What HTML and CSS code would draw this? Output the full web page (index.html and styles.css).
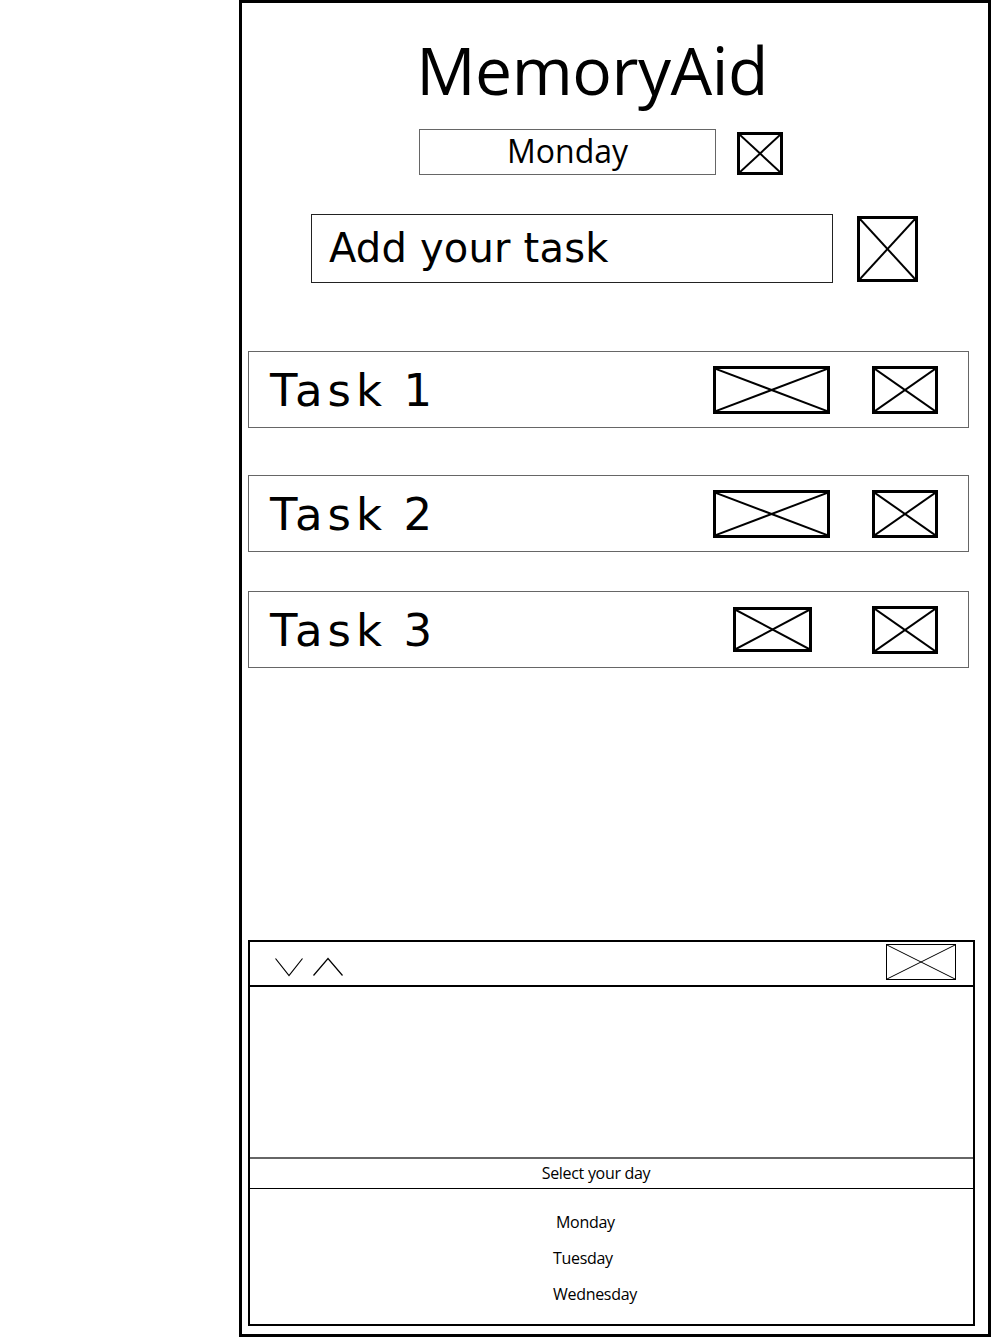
FILE: index.html
```html
<!DOCTYPE html>
<html lang="en">
<head>
<meta charset="utf-8">
<title>MemoryAid</title>
<link rel="stylesheet" href="styles.css">
</head>
<body>
<div class="frame">
  <h1 class="title">MemoryAid</h1>

  <div class="day-row">
    <div class="day-box">Monday</div>
    <div class="xbox day-check"><svg viewBox="0 0 100 100" preserveAspectRatio="none"><line x1="0" y1="0" x2="100" y2="100"/><line x1="100" y1="0" x2="0" y2="100"/></svg></div>
  </div>

  <div class="add-row">
    <div class="add-box">Add your task</div>
    <div class="xbox add-btn"><svg viewBox="0 0 100 100" preserveAspectRatio="none"><line x1="0" y1="0" x2="100" y2="100"/><line x1="100" y1="0" x2="0" y2="100"/></svg></div>
  </div>

  <div class="tasks">
    <div class="task task-first">
      <span class="task-name">Task 1</span>
      <div class="xbox wide"><svg viewBox="0 0 100 100" preserveAspectRatio="none"><line x1="0" y1="0" x2="100" y2="100"/><line x1="100" y1="0" x2="0" y2="100"/></svg></div>
      <div class="xbox small"><svg viewBox="0 0 100 100" preserveAspectRatio="none"><line x1="0" y1="0" x2="100" y2="100"/><line x1="100" y1="0" x2="0" y2="100"/></svg></div>
    </div>
    <div class="task task-second">
      <span class="task-name">Task 2</span>
      <div class="xbox wide"><svg viewBox="0 0 100 100" preserveAspectRatio="none"><line x1="0" y1="0" x2="100" y2="100"/><line x1="100" y1="0" x2="0" y2="100"/></svg></div>
      <div class="xbox small"><svg viewBox="0 0 100 100" preserveAspectRatio="none"><line x1="0" y1="0" x2="100" y2="100"/><line x1="100" y1="0" x2="0" y2="100"/></svg></div>
    </div>
    <div class="task task-third">
      <span class="task-name">Task 3</span>
      <div class="xbox narrow"><svg viewBox="0 0 100 100" preserveAspectRatio="none"><line x1="0" y1="0" x2="100" y2="100"/><line x1="100" y1="0" x2="0" y2="100"/></svg></div>
      <div class="xbox small"><svg viewBox="0 0 100 100" preserveAspectRatio="none"><line x1="0" y1="0" x2="100" y2="100"/><line x1="100" y1="0" x2="0" y2="100"/></svg></div>
    </div>
  </div>

  <div class="panel">
    <div class="panel-head">
      <svg class="chev" viewBox="0 0 28 18"><polyline points="0.5,0.5 14,17.5 27.5,0.5"/></svg>
      <svg class="chev" viewBox="0 0 30 18"><polyline points="0.5,17.5 15,0.5 29.5,17.5"/></svg>
      <div class="head-btn"><svg viewBox="0 0 100 100" preserveAspectRatio="none"><line x1="0" y1="0" x2="100" y2="100"/><line x1="100" y1="0" x2="0" y2="100"/></svg></div>
    </div>
    <div class="panel-body"></div>
    <div class="select-row">Select your day</div>
    <ul class="day-list">
      <li class="day-item day-mon">Monday</li>
      <li class="day-item">Tuesday</li>
      <li class="day-item">Wednesday</li>
    </ul>
  </div>
</div>
</body>
</html>
```
FILE: styles.css
```css
* { box-sizing: border-box; }

html, body {
  margin: 0;
  padding: 0;
  background: #fff;
}

body {
  font-family: "Open Sans", "DejaVu Sans", sans-serif;
  color: #000;
}

.frame {
  margin-left: 239px;
  width: 752px;
  height: 1337px;
  border: 3px solid #000;
  display: flex;
  flex-direction: column;
}

.title {
  margin: 33px 0 0 0;
  padding-right: 46px;
  font-family: "Open Sans", sans-serif;
  font-weight: 400;
  font-size: 66px;
  line-height: 66px;
  letter-spacing: -0.5px;
  text-align: center;
}

.day-row {
  display: flex;
  align-items: flex-start;
  gap: 21px;
  margin-top: 27px;
  padding-left: 177px;
}

.day-box {
  width: 297px;
  height: 46px;
  border: 1px solid #666;
  font-size: 32px;
  line-height: 42px;
  text-align: center;
}

.xbox {
  border: 3px solid #000;
  flex: none;
}

.xbox svg,
.head-btn svg {
  display: block;
  width: 100%;
  height: 100%;
}

.xbox line,
.head-btn line {
  stroke: #000;
  stroke-width: 2;
  vector-effect: non-scaling-stroke;
}

.day-check {
  width: 46px;
  height: 43px;
  margin-top: 3px;
}

.add-row {
  display: flex;
  align-items: flex-start;
  gap: 24px;
  margin-top: 39px;
  padding-left: 69px;
}

.add-box {
  width: 522px;
  height: 69px;
  border: 1px solid #222;
  padding-left: 17px;
  font-family: "DejaVu Sans", sans-serif;
  font-size: 40px;
  line-height: 67px;
  letter-spacing: 0.2px;
}

.add-btn {
  width: 61px;
  height: 66px;
  margin-top: 2px;
}

.tasks {
  display: flex;
  flex-direction: column;
  margin-left: 6px;
}

.task {
  width: 721px;
  height: 77px;
  border: 1px solid #666;
  display: flex;
  align-items: center;
  padding: 0 30px 0 21px;
}

.task-first { margin-top: 68px; }
.task-second { margin-top: 47px; }
.task-third { margin-top: 39px; }

.task-name {
  flex: 1;
  font-family: "DejaVu Sans", sans-serif;
  font-size: 45px;
  line-height: 75px;
  letter-spacing: 5px;
  word-spacing: -3px;
  padding-top: 2px;
}

.wide {
  width: 117px;
  height: 48px;
  margin-right: 42px;
}

.narrow {
  width: 79px;
  height: 45px;
  margin-right: 60px;
}

.small {
  width: 66px;
  height: 48px;
}

.panel {
  margin: auto 0 8px 6px;
  width: 727px;
  height: 386px;
  border: 2px solid #000;
  display: flex;
  flex-direction: column;
}

.panel-head {
  height: 45px;
  border-bottom: 2px solid #000;
  display: flex;
  align-items: center;
  padding: 0 17px 0 25px;
  gap: 10px;
  flex: none;
}

.chev {
  width: 28px;
  height: 18px;
  margin-top: 6px;
  overflow: visible;
}

.chev + .chev {
  width: 30px;
}

.chev polyline {
  fill: none;
  stroke: #000;
  stroke-width: 1.2;
}

.head-btn {
  margin-left: auto;
  width: 70px;
  height: 36px;
  border: 1px solid #000;
  margin-top: -4px;
}

.head-btn line {
  stroke-width: 1;
}

.panel-body {
  height: 172px;
  border-bottom: 2px solid #666;
  flex: none;
}

.select-row {
  height: 30px;
  border-bottom: 1px solid #000;
  font-size: 16px;
  line-height: 28px;
  letter-spacing: -0.3px;
  text-align: center;
  padding-right: 31px;
  flex: none;
}

.day-list {
  list-style: none;
  margin: 0;
  padding: 15px 0 0 303px;
}

.day-item {
  font-size: 16px;
  line-height: 36px;
  letter-spacing: -0.3px;
}

.day-mon {
  margin-left: 3px;
}
```
